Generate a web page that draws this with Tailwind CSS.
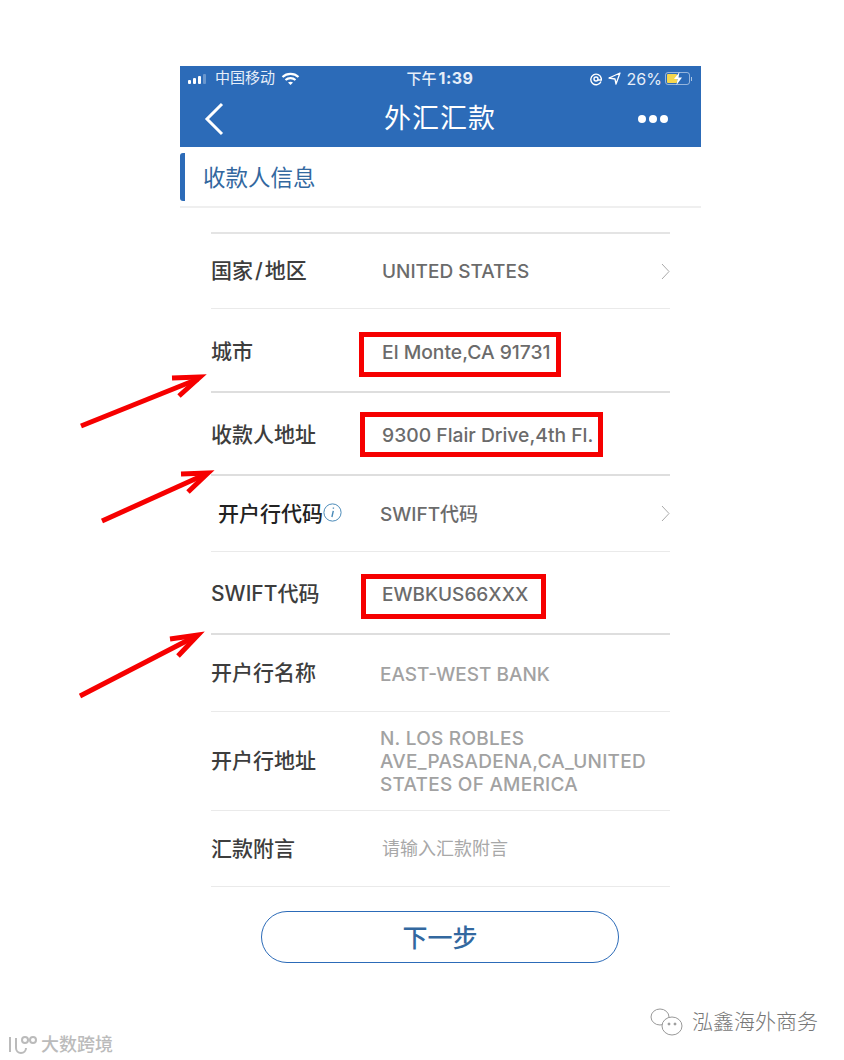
<!DOCTYPE html>
<html lang="zh-CN">
<head>
    <meta charset="UTF-8">
    <meta name="viewport" content="width=device-width, initial-scale=1.0">
    <title>外汇汇款</title>
    <script src="https://cdn.jsdelivr.net/npm/@tailwindcss/browser@4"></script>
</head>
<body class="bg-white font-['Inter','Noto_Sans_CJK_SC',sans-serif]">
    <div class="relative w-[844px] h-[1060px] overflow-hidden pt-[66px]">
        <div class="w-[521px] ml-[180px]">
            <!-- header -->
            <div class="bg-[#2c6bb8] h-[81px] text-white">
                <div class="grid grid-cols-[1fr_auto_1fr] items-center h-[25px] pl-[8px] pr-[9px] text-[15px] text-[#e6eef8]">
                    <div class="flex items-center">
                        <div class="flex items-end gap-[2px] h-[10px] mr-[9px]">
                            <span class="w-[3px] h-[4px] bg-white rounded-[1px]"></span>
                            <span class="w-[3px] h-[6px] bg-white rounded-[1px]"></span>
                            <span class="w-[3px] h-[8px] bg-white rounded-[1px]"></span>
                            <span class="w-[3px] h-[10px] bg-white/30 rounded-[1px]"></span>
                        </div>
                        <span>中国移动</span>
                        <svg class="ml-[6px]" width="19" height="14" viewBox="0 0 19 14" fill="none" stroke="#fff" stroke-width="2.2"><path d="M1.5 5 C6 0.8 13 0.8 17.5 5"/><path d="M4.5 8 C7.3 5.5 11.7 5.5 14.5 8"/><path d="M9.5 13 L7 10.4 C8.4 9.4 10.6 9.4 12 10.4 Z" fill="#fff" stroke="none"/></svg>
                    </div>
                    <span class="font-medium">下午<span class="ml-[2px] text-[16px] font-bold tracking-[0.5px]">1:39</span></span>
                    <div class="flex items-center justify-end">
                        <svg width="14" height="14" viewBox="0 0 14 14" fill="none" stroke="#fff" stroke-width="1.4"><path d="M12 9.5 A5.3 5.3 0 1 1 12.3 6.5 L12.3 8 L9 8"/><circle cx="7" cy="7" r="2"/></svg>
                        <svg class="ml-[5px]" width="13" height="13" viewBox="0 0 13 13" fill="none" stroke="#fff" stroke-width="1.3"><path d="M12 1 L1 6 L7 7 L8 12 Z" stroke-linejoin="round"/></svg>
                        <span class="ml-[6px] text-[16px]">26%</span>
                        <div class="relative ml-[3px] w-[25px] h-[13px] border border-white/50 rounded-[3px] p-[1px]">
                            <div class="w-[10px] h-full bg-[#f5d64e] rounded-[1px]"></div>
                            <svg class="absolute left-[7px] top-[-1px]" width="10" height="13" viewBox="0 0 10 13"><path d="M6.5 0 L1 7 L4.5 7 L3.5 13 L9 5.5 L5.5 5.5 Z" fill="#fff"/></svg>
                        </div>
                        <span class="ml-[1px] w-[1px] h-[4px] bg-white/60"></span>
                    </div>
                </div>
                <div class="flex items-center justify-between h-[55px] pl-[24px] pr-[33px]">
                    <div class="w-[38px]">
                        <svg width="20" height="34" viewBox="0 0 20 34" fill="none" stroke="#fff" stroke-width="3"><path d="M18 2 L3 17 L18 32"/></svg>
                    </div>
                    <span class="text-[27px] tracking-[1px] leading-none">外汇汇款</span>
                    <div class="flex gap-[3px]">
                        <span class="w-[8px] h-[8px] rounded-full bg-white"></span>
                        <span class="w-[8px] h-[8px] rounded-full bg-white"></span>
                        <span class="w-[8px] h-[8px] rounded-full bg-white"></span>
                    </div>
                </div>
            </div>
            <!-- section title -->
            <div class="mt-[6px] h-[55px] border-b-2 border-[#efefef]">
                <div class="h-[48px] border-l-[5px] border-[#2c6bb8] rounded-l-[3px] pl-[18px] pt-[2px] flex items-center text-[22.5px] text-[#33689f]">收款人信息</div>
            </div>
            <!-- form rows -->
            <div class="mt-[24px] mx-[31px] w-[459px] border-t-2 border-[#e4e4e4] text-[21px] text-[#3d3d3d] font-medium">
                <div class="flex items-center h-[75px] border-b border-[#eaeaea]">
                    <span class="w-[171px]">国家<span class="mx-[2px]">/</span>地区</span>
                    <span class="mt-[2px] text-[#6b6b6b] text-[19px] font-medium">UNITED STATES</span>
                    <svg class="ml-auto" width="9" height="17" viewBox="0 0 9 17" fill="none" stroke="#aaa" stroke-width="1"><path d="M1 1 L8 8.5 L1 16"/></svg>
                </div>
                <div class="flex items-center h-[84px] border-b-2 border-[#dedede] pt-[3px]">
                    <span class="w-[171px]">城市</span>
                    <span class="mt-[2px] text-[#6b6b6b] text-[19.3px] font-medium">El Monte,CA 91731</span>
                </div>
                <div class="flex items-center h-[83px] border-b-2 border-[#dedede] pt-[2px]">
                    <span class="w-[171px]">收款人地址</span>
                    <span class="mt-[2px] text-[#6b6b6b] text-[19.3px] font-medium">9300 Flair Drive,4th Fl.</span>
                </div>
                <div class="flex items-center h-[76px] border-b border-[#eaeaea]">
                    <span class="w-[169px] pl-[7px] flex items-center text-[#222]">开户行代码<svg class="mt-[-2px]" width="19" height="19" viewBox="0 0 19 19" fill="none" stroke="#4a8ab8" stroke-width="1"><circle cx="9.5" cy="9.5" r="8.6"/><path d="M10.3 7.8 L8.9 14 M10.4 4.6 L10.4 5.8" stroke-width="1.4"/></svg></span>
                    <span class="mt-[4px] text-[#6b6b6b] text-[19px]">SWIFT代码</span>
                    <svg class="ml-auto" width="9" height="17" viewBox="0 0 9 17" fill="none" stroke="#aaa" stroke-width="1"><path d="M1 1 L8 8.5 L1 16"/></svg>
                </div>
                <div class="flex items-center h-[83px] border-b-2 border-[#dedede] pt-[3px]">
                    <span class="w-[171px]">SWIFT代码</span>
                    <span class="mt-[2px] text-[#6b6b6b] text-[19px] font-medium">EWBKUS66XXX</span>
                </div>
                <div class="flex items-center h-[77px] border-b border-[#eaeaea]">
                    <span class="w-[169px]">开户行名称</span>
                    <span class="mt-[4px] text-[#a2a2a2] text-[19px] font-medium">EAST-WEST BANK</span>
                </div>
                <div class="flex items-center h-[99px] border-b border-[#eaeaea]">
                    <span class="w-[169px] shrink-0">开户行地址</span>
                    <span class="text-[#a2a2a2] text-[19px] font-medium leading-[23px] tracking-[0.25px]">N. LOS ROBLES<br>AVE_PASADENA,CA_UNITED<br>STATES OF AMERICA</span>
                </div>
                <div class="flex items-center h-[76px] border-b border-[#eaeaea]">
                    <span class="w-[171px]">汇款附言</span>
                    <span class="text-[#a8a8a8] text-[18px] font-normal">请输入汇款附言</span>
                </div>
            </div>
            <!-- next button -->
            <div class="mt-[24px] ml-[81px] w-[358px] h-[52px] pt-[4px] rounded-full border border-[#2c6bb8] flex items-center justify-center text-[25px] font-medium text-[#33689f]">下一步</div>
        </div>

        <!-- red annotations -->
        <div class="absolute left-[359px] top-[332px] w-[202px] h-[45px] border-[5px] border-[#f60000]"></div>
        <div class="absolute left-[360px] top-[412px] w-[243px] h-[45px] border-[5px] border-[#f60000]"></div>
        <div class="absolute left-[361px] top-[574px] w-[185px] h-[45px] border-[5px] border-[#f60000]"></div>
        <svg class="absolute left-0 top-0" width="844" height="1060" fill="none" stroke="#f60000" stroke-width="5">
            <path d="M81 426 L198 379"/><path d="M172 378 L200 377 L179 396"/>
            <path d="M102 521 L206 474"/><path d="M181 474 L208 473 L188 492"/>
            <path d="M80 696 L196 636"/><path d="M170 639 L198 635 L178 656"/>
        </svg>

        <!-- watermarks -->
        <div class="absolute left-[648px] top-[1006px] flex items-center gap-[4px] text-[21px] text-[#777] font-light">
            <svg width="40" height="32" viewBox="0 0 40 32" fill="none" stroke="#999" stroke-width="1"><ellipse cx="12" cy="11" rx="9" ry="8"/><ellipse cx="24" cy="20" rx="10" ry="9" fill="#fff"/><circle cx="21" cy="18" r="1" fill="#999"/><circle cx="27" cy="18" r="1" fill="#999"/></svg>
            <span>泓鑫海外商务</span>
        </div>
        <div class="absolute left-[6px] top-[1031px] flex items-center gap-[3px] text-[18px] text-[#bbb] font-medium">
            <svg width="32" height="22" viewBox="0 0 32 22" fill="none" stroke="#bbb" stroke-width="2"><path d="M4 3 L4 18"/><path d="M10 4 L10 14 A5 5 0 0 0 20 14"/><circle cx="19" cy="6" r="3"/><circle cx="27" cy="6" r="3"/></svg>
            <span>大数跨境</span>
        </div>
    </div>
</body>
</html>
